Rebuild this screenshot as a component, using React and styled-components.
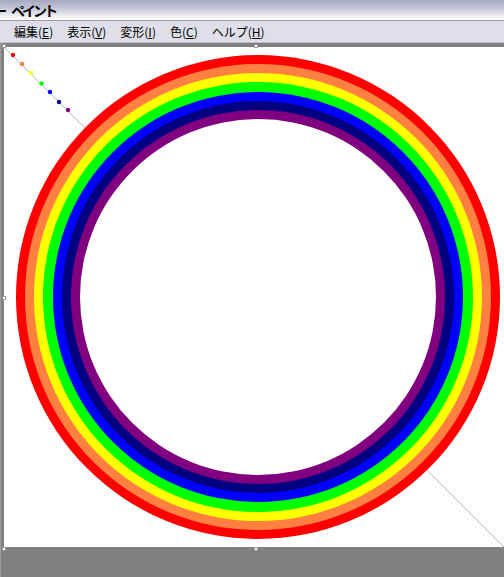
import React from 'react';
import styled, { createGlobalStyle } from 'styled-components';

const GlobalStyle = createGlobalStyle`
  html, body {
    margin: 0;
    padding: 0;
    width: 504px;
    height: 577px;
    overflow: hidden;
    background: #808080;
  }
  * { box-sizing: border-box; }
`;

const rings = [
  { r: 242, color: '#ff0000' },
  { r: 233, color: '#ff8040' },
  { r: 224, color: '#ffff00' },
  { r: 215, color: '#00ff00' },
  { r: 205, color: '#0000ff' },
  { r: 196, color: '#000080' },
  { r: 187, color: '#800080' },
  { r: 178, color: '#ffffff' },
];

const dots = [
  { x: 9, y: 8, color: '#ff0000' },
  { x: 18, y: 17, color: '#ff8040' },
  { x: 27, y: 26, color: '#ffff00' },
  { x: 37.5, y: 36.5, color: '#00ff00' },
  { x: 46, y: 45, color: '#0000ff' },
  { x: 55, y: 55, color: '#000080' },
  { x: 64, y: 63, color: '#800080' },
];

const menus = [
  ['編集', 'E'],
  ['表示', 'V'],
  ['変形', 'I'],
  ['色', 'C'],
  ['ヘルプ', 'H'],
];

const handles = [
  [-2, -3], [250, -3], [-2, 249], [-2, 500], [250, 500],
];

class App extends React.Component {
  render() {
    return (
      <Window>
        <GlobalStyle />
        <TitleBar>
          <TitleDash>ー</TitleDash>
          <TitleText>ペイント</TitleText>
        </TitleBar>
        <MenuBar>
          {menus.map(([label, key]) => (
            <MenuItem key={key}>
              {label}(<u>{key}</u>)
            </MenuItem>
          ))}
        </MenuBar>
        <Workspace>
          <Canvas>
            <svg width="500" height="500" viewBox="0 0 500 500">
              <line x1="0" y1="0" x2="500" y2="500" stroke="#b4b4b4" strokeWidth="1" />
              {rings.map(ring => (
                <circle key={ring.r} cx="254" cy="250" r={ring.r} fill={ring.color} />
              ))}
              {dots.map(d => (
                <circle key={d.x} cx={d.x} cy={d.y} r="2.2" fill={d.color} />
              ))}
            </svg>
            {handles.map(([x, y]) => (
              <Handle key={`${x}-${y}`} style={{ left: x, top: y }} />
            ))}
          </Canvas>
        </Workspace>
      </Window>
    );
  }
}

export default App;

const Window = styled.div`
  width: 504px;
  height: 577px;
  display: flex;
  flex-direction: column;
  overflow: hidden;
  font-family: "Noto Sans CJK JP", "DejaVu Sans", sans-serif;
  color: #000;
`;

const TitleBar = styled.div`
  height: 21px;
  flex: none;
  display: flex;
  align-items: center;
  gap: 4px;
  background: linear-gradient(#a6a6c2 0%, #c8c8da 45%, #ffffff 95%);
  border-bottom: 1px solid #9a9ab2;
  overflow: hidden;
  font-size: 14px;
  font-weight: bold;
  line-height: 1;
  white-space: nowrap;
`;

const TitleDash = styled.span`
  margin-left: -7px;
`;

const TitleText = styled.span`
  letter-spacing: -3px;
`;

const MenuBar = styled.div`
  height: 22px;
  flex: none;
  display: flex;
  align-items: center;
  padding-left: 7px;
  background: #dedfe8;
  border-bottom: 1px solid #c2c2cc;
`;

const MenuItem = styled.span`
  padding: 0 7px;
  font-size: 12px;
  line-height: 1;
  white-space: nowrap;

  u {
    text-underline-offset: 1px;
  }
`;

const Workspace = styled.div`
  flex: 1;
  background: #808080;
  padding: 4px 0 0 3px;
  border-left: 1px solid #9c9c9c;
`;

const Canvas = styled.div`
  position: relative;
  width: 500px;
  height: 500px;
  background: #ffffff;

  svg {
    display: block;
  }
`;

const Handle = styled.div`
  position: absolute;
  width: 4px;
  height: 4px;
  background: #ffffff;
  border: 1px solid #9a9a9a;
`;
